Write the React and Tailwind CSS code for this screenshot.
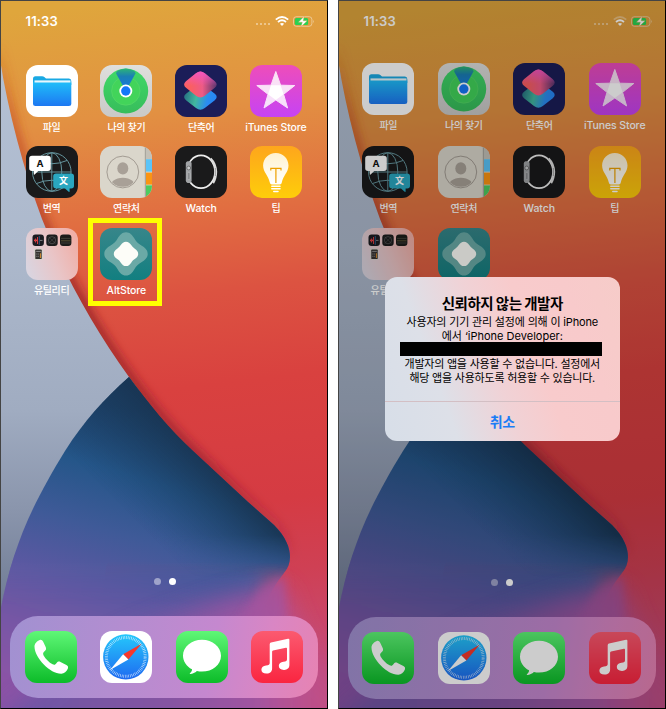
import React from "react";

const EDGE = "M-2 45 C5 100 22 165 42 219 C64 275 95 330 129 377 C148 403 170 430 193 451 L248 502 L274 525 C284 535 288 546 288 555";

function Wallpaper() {
  return (
    <svg className="absolute inset-0 h-full w-full" viewBox="0 0 328 709" preserveAspectRatio="none">
      <defs>
        <linearGradient id="warm" gradientUnits="userSpaceOnUse" x1="120" y1="0" x2="200" y2="709">
          <stop offset="0" stopColor="#dfa63c" />
          <stop offset=".16" stopColor="#e29142" />
          <stop offset=".31" stopColor="#e16d41" />
          <stop offset=".42" stopColor="#dc5341" />
          <stop offset=".55" stopColor="#d9413f" />
          <stop offset=".72" stopColor="#d53b43" />
          <stop offset=".82" stopColor="#cf4054" />
          <stop offset=".9" stopColor="#c9476a" />
          <stop offset="1" stopColor="#c44d80" />
        </linearGradient>
        <linearGradient id="slate" x1="0" y1="0" x2="0" y2="1">
          <stop offset="0" stopColor="#b4c1d5" />
          <stop offset=".3" stopColor="#adb9cc" />
          <stop offset=".55" stopColor="#a0acc1" />
          <stop offset=".7" stopColor="#8a95ac" />
          <stop offset=".85" stopColor="#6f7b94" />
          <stop offset="1" stopColor="#6c7890" />
        </linearGradient>
        <linearGradient id="deep" gradientUnits="userSpaceOnUse" x1="190" y1="425" x2="110" y2="709">
          <stop offset="0" stopColor="#1c3c60" />
          <stop offset=".22" stopColor="#255689" />
          <stop offset=".42" stopColor="#3f5a98" />
          <stop offset=".62" stopColor="#5c58a2" />
          <stop offset=".82" stopColor="#7957a5" />
          <stop offset="1" stopColor="#8b53a6" />
        </linearGradient>
        <linearGradient id="violet" gradientUnits="userSpaceOnUse" x1="0" y1="0" x2="328" y2="0">
          <stop offset="0" stopColor="#6557a6" />
          <stop offset=".5" stopColor="#8455a2" />
          <stop offset=".8" stopColor="#a854a0" />
          <stop offset="1" stopColor="#c24f84" />
        </linearGradient>
        <linearGradient id="shade" gradientUnits="userSpaceOnUse" x1="0" y1="40" x2="0" y2="560">
          <stop offset="0" stopColor="#c8481c" stopOpacity="0" />
          <stop offset=".15" stopColor="#c03c1c" stopOpacity=".5" />
          <stop offset=".5" stopColor="#8c1a20" stopOpacity=".75" />
          <stop offset=".8" stopColor="#8c1a2c" stopOpacity=".6" />
          <stop offset="1" stopColor="#8c1a30" stopOpacity=".05" />
        </linearGradient>
        <linearGradient id="navy" gradientUnits="userSpaceOnUse" x1="240" y1="495" x2="175" y2="560">
          <stop offset="0" stopColor="#193654" stopOpacity=".95" />
          <stop offset="1" stopColor="#1d4a78" stopOpacity="0" />
        </linearGradient>
        <linearGradient id="navyfade" gradientUnits="userSpaceOnUse" x1="0" y1="535" x2="0" y2="578">
          <stop offset="0" stopColor="#fff" />
          <stop offset="1" stopColor="#fff" stopOpacity="0" />
        </linearGradient>
        <linearGradient id="bodyfade" gradientUnits="userSpaceOnUse" x1="0" y1="562" x2="0" y2="604">
          <stop offset="0" stopColor="#fff" />
          <stop offset="1" stopColor="#fff" stopOpacity="0" />
        </linearGradient>
        <mask id="navymask" maskUnits="userSpaceOnUse" x="0" y="0" width="328" height="709"><rect width="328" height="709" fill="url(#navyfade)" /></mask>
        <mask id="bodymask" maskUnits="userSpaceOnUse" x="0" y="0" width="328" height="709"><rect width="328" height="709" fill="url(#bodyfade)" /></mask>
        <filter id="soft" filterUnits="userSpaceOnUse" x="-60" y="0" width="460" height="709"><feGaussianBlur stdDeviation="5" /></filter>
        <filter id="softer" filterUnits="userSpaceOnUse" x="-60" y="480" width="460" height="300"><feGaussianBlur stdDeviation="12" /></filter>
        <filter id="fine" filterUnits="userSpaceOnUse" x="150" y="520" width="200" height="200"><feGaussianBlur stdDeviation="5" /></filter>
        <filter id="edge" filterUnits="userSpaceOnUse" x="-60" y="540" width="460" height="220"><feGaussianBlur stdDeviation="9" /></filter>
        <clipPath id="rightside"><path d="M129 377 L340 377 L340 709 L0 709 L0 612 C13 545 32 505 65 451 C84 421 104 399 129 377Z" /></clipPath>
      </defs>
      <rect width="328" height="709" fill="url(#warm)" />
      <path d={EDGE} fill="none" stroke="url(#shade)" strokeWidth="11" filter="url(#soft)" />
      <path d="M-2 45 C5 100 22 165 42 219 C64 275 95 330 129 377 L140 392 L100 600 L0 709 L-2 709Z" fill="url(#slate)" />
      <g clipPath="url(#rightside)">
        {/* soft lower body of the fold */}
        <path d="M-30 560 H240 L266 572 C266 590 256 615 256 640 L280 760 H-30Z" fill="url(#deep)" filter="url(#edge)" />
        {/* crisp upper body of the fold, fading out below the tip */}
        <path
          d="M129 377 C148 403 170 430 193 451 L248 502 L274 525 C286 537 290 548 290 557 C290 563 288 568 284 573 C277 582 270 592 265 606 L-5 606 L-5 377Z"
          fill="url(#deep)"
          mask="url(#bodymask)"
        />
        <path d="M129 377 C148 403 170 430 193 451 L248 502 L274 525 C286 537 290 548 290 557 C290 563 288 568 284 573 L276 583 L0 590 L0 377Z" fill="url(#navy)" mask="url(#navymask)" />
        <path d="M280 588 Q240 592 190 610 Q120 632 60 670 L-20 740 H350 V690 Q300 650 284 588Z" fill="url(#violet)" opacity=".9" filter="url(#softer)" />
        <path d="M285 575 L262 588 L226 640 L286 650Z" fill="#a355a0" opacity=".7" filter="url(#fine)" />
      </g>
    </svg>
  );
}

const bg = (fill) => <rect width="52" height="52" rx="12" fill={fill} />;

function Grad({ id, from, to }) {
  return (
    <defs>
      <linearGradient id={id} x1="0" y1="0" x2="0" y2="1">
        <stop offset="0" stopColor={from} />
        <stop offset="1" stopColor={to} />
      </linearGradient>
    </defs>
  );
}

const art = {
  files: (
    <>
      {bg("#fff")}
      <Grad id="g-files" from="#1fbdf9" to="#1d78f2" />
      <path d="M7 14 Q7 11.3 9.5 11.3 H16 Q17.5 11.3 18.6 12.3 L20 13.5 H43 Q45.3 13.5 45.3 16 V20 H7Z" fill="#1aa9e4" />
      <rect x="8.5" y="15.4" width="36" height="3" fill="#fff" opacity=".9" />
      <path d="M7 17.4 H45.3 V38.5 Q45.3 41 42.8 41 H9.5 Q7 41 7 38.5Z" fill="url(#g-files)" />
    </>
  ),
  find: (
    <>
      <Grad id="g-find" from="#dfdfdd" to="#c9c9c7" />
      <Grad id="g-find2" from="#3fd968" to="#37bd5b" />
      <linearGradient id="g-wedge" x1="0" y1="0" x2="0" y2="1"><stop offset="0" stopColor="#2cb478" /><stop offset=".35" stopColor="#1b7fb4" /><stop offset="1" stopColor="#1478e8" /></linearGradient>
      {bg("url(#g-find)")}
      <circle cx="25.8" cy="26" r="22.4" fill="url(#g-find2)" />
      <circle cx="25.8" cy="26" r="14.2" fill="#42d45a" stroke="#5ad86c" strokeWidth=".6" />
      <path d="M25.8 26 L16 8.2 Q16.5 4.6 25.8 3.6 Q35.1 4.6 35.6 8.2Z" fill="url(#g-wedge)" />
      <circle cx="25.8" cy="26" r="6.5" fill="#fff" />
      <circle cx="25.8" cy="26" r="4.7" fill="#1478f8" />
    </>
  ),
  shortcuts: (
    <>
      {bg("#1b1d58")}
      <defs>
        <linearGradient id="g-s2" x1="0" y1=".3" x2="1" y2=".5"><stop offset="0" stopColor="#256d80" /><stop offset=".4" stopColor="#42b89e" /><stop offset=".75" stopColor="#2b8df0" /><stop offset="1" stopColor="#2586f8" /></linearGradient>
        <linearGradient id="g-s3" x1=".2" y1=".5" x2="1" y2=".5"><stop offset="0" stopColor="#fa5f62" /><stop offset=".45" stopColor="#ee5b86" /><stop offset="1" stopColor="#59356f" /></linearGradient>
        <linearGradient id="g-s4" x1="0" y1="0" x2="0" y2="1"><stop offset="0" stopColor="#f454c8" stopOpacity=".9" /><stop offset=".55" stopColor="#f454c8" stopOpacity="0" /></linearGradient>
      </defs>
      <path d="M21 21 Q25.4 17.4 29.8 21 L39.8 28.8 Q43.6 32 39.8 35.2 L29.8 43 Q25.4 46.6 21 43 L11 35.2 Q7.2 32 11 28.8Z" fill="url(#g-s2)" />
      <path d="M21 8.2 Q25.4 4.6 29.8 8.2 L39.8 16.2 Q43.6 19.5 39.8 22.8 L29.8 30.8 Q25.4 34.4 21 30.8 L11 22.8 Q7.2 19.5 11 16.2Z" fill="url(#g-s3)" />
      <path d="M21 8.2 Q25.4 4.6 29.8 8.2 L39.8 16.2 Q43.6 19.5 39.8 22.8 L29.8 30.8 Q25.4 34.4 21 30.8 L11 22.8 Q7.2 19.5 11 16.2Z" fill="url(#g-s4)" />
    </>
  ),
  itunes: (
    <>
      <Grad id="g-it" from="#ee4dba" to="#c643f4" />
      {bg("url(#g-it)")}
      <path d="M25.8 6.5 L30.6 20.2 L44.8 20.5 L33.6 29.3 L37.6 43 L25.8 35 L14 43 L18 29.3 L6.8 20.5 L21 20.2Z" fill="#fff" opacity=".84" stroke="#fff" strokeWidth="1" strokeLinejoin="round" />
      <path d="M21 20.2 H30.6 L33.6 29.3 L25.8 35 L18 29.3Z" fill="#fff" />
    </>
  ),
  translate: (
    <>
      {bg("#1a1a1b")}
      <g fill="none" stroke="#64949d" strokeWidth="1">
        <circle cx="25.8" cy="26" r="19.3" />
        <ellipse cx="25.8" cy="26" rx="10" ry="19.3" />
        <path d="M25.8 6.7V45.3M6.5 26H45M10.5 14.5Q26 21 41 14.5M10.5 37.5Q26 31 41 37.5" />
      </g>
      <path d="M6 9.8 H22 Q24.8 9.8 24.8 12.5 V22.3 Q24.8 25 22 25 H12.3 L8.6 28.6 Q7.8 29 7.8 28 V25 H6 Q3.2 25 3.2 22.3 V12.5 Q3.2 9.8 6 9.8Z" fill="#fff" />
      <path d="M30 27.6 H45.2 Q48 27.6 48 30.3 V39.7 Q48 42.4 45.2 42.4 H43.6 V45.3 Q43.6 46.4 42.7 45.7 L39 42.4 H30 Q27.2 42.4 27.2 39.7 V30.3 Q27.2 27.6 30 27.6Z" fill="#2aa7c0" />
      <text x="14" y="20.8" textAnchor="middle" className="font-['Inter','Noto_Sans_CJK_KR',sans-serif] text-[9.5px] font-bold" fill="#111">A</text>
      <text x="37.6" y="38.4" textAnchor="middle" className="font-['Noto_Sans_CJK_JP',sans-serif] text-[9px] font-bold" fill="#fff">文</text>
    </>
  ),
  contacts: (
    <>
      <clipPath id="c-con"><rect width="52" height="52" rx="12" /></clipPath>
      <clipPath id="c-head"><circle cx="22.8" cy="26" r="14.8" /></clipPath>
      <g clipPath="url(#c-con)">
        <rect width="52" height="52" fill="#dad6cb" />
        <rect x="45.4" width="7" height="13" fill="#c4c1b8" />
        <rect x="45.4" y="13.2" width="7" height="12.4" fill="#5ac4f8" />
        <rect x="45.4" y="26.6" width="7" height="12" fill="#fb9412" />
        <rect x="45.4" y="39.4" width="7" height="13" fill="#4dcb60" />
        <path d="M45.4 0V52" stroke="#a8a69e" strokeWidth="1.2" />
      </g>
      <circle cx="22.8" cy="26" r="15.9" fill="none" stroke="#a39c93" strokeWidth="1" />
      <g clipPath="url(#c-head)" fill="#a8a097">
        <ellipse cx="22.8" cy="22.4" rx="5.5" ry="6.2" />
        <ellipse cx="22.8" cy="42" rx="13.5" ry="10.2" />
      </g>
    </>
  ),
  watch: (
    <>
      {bg("#1a1a1b")}
      <ellipse cx="26" cy="25.8" rx="14" ry="16.4" fill="none" stroke="#ededed" strokeWidth="1.7" />
      <path d="M35.5 12.5 Q40.6 17.5 41 25.8 Q40.8 33 38 37" fill="none" stroke="#dcdcdc" strokeWidth="2.4" />
      <path d="M40.3 22V30" stroke="#9a9a9a" strokeWidth="1" />
      <path d="M12.5 15.2 H15 Q16.6 15.6 16.6 17.4 V34.6 Q16.6 36.6 15 37 H12.5 Q10.8 36.4 10.8 34.6 V17.4 Q10.8 15.8 12.5 15.2Z" fill="#a1a3a6" />
      <circle cx="13.7" cy="22" r="1.9" fill="#c9cacc" stroke="#565656" strokeWidth=".7" />
      <rect x="12.4" y="26.5" width="2.6" height="7" rx="1" fill="#87898c" stroke="#cfcfcf" strokeWidth=".4" />
    </>
  ),
  tips: (
    <>
      <Grad id="g-tip" from="#fea61c" to="#fecd0a" />
      <Grad id="g-bulb" from="#fff2cf" to="#fff" />
      {bg("url(#g-tip)")}
      <path d="M25.8 7 C33.2 7 38.5 12.7 38.5 19.4 C38.5 26 33.2 29.4 31.8 36.4 Q31.5 38.4 29.8 38.4 H21.8 Q20.2 38.4 19.8 36.4 C18.4 29.4 13.1 26 13.1 19.4 C13.1 12.7 18.4 7 25.8 7Z" fill="url(#g-bulb)" />
      <path d="M20.8 24.5V22.3H31V24.5M25.9 22.3V37" fill="none" stroke="#eda000" strokeWidth="1.2" />
      <path d="M21.8 40.2H30M21.8 42.8H30M23.8 45.4H28" stroke="#fff" strokeWidth="1.5" strokeLinecap="round" />
    </>
  ),
  folder: (
    <>
      <defs>
        <linearGradient id="g-fold" x1="0" y1=".7" x2="1" y2=".3"><stop offset="0" stopColor="#dad4df" /><stop offset=".5" stopColor="#e9c5c7" /><stop offset="1" stopColor="#f0aea6" /></linearGradient>
      </defs>
      {bg("url(#g-fold)")}
      <rect x="6.5" y="6.5" width="11.4" height="11.4" rx="3" fill="#1b1b20" />
      <path d="M8 12.4H12" stroke="#e34345" strokeWidth="1.6" />
      <path d="M9.5 10.5V14.5M11.5 9V16" stroke="#d23b40" strokeWidth="1" />
      <path d="M13.3 8V16.8" stroke="#3b83c8" strokeWidth=".6" />
      <path d="M14 12.4H16.5" stroke="#aaa" strokeWidth=".7" />
      <rect x="20.3" y="6.5" width="11.4" height="11.4" rx="3" fill="#1c1c1d" />
      <circle cx="26" cy="12.2" r="3.6" fill="none" stroke="#666" strokeWidth=".6" />
      <path d="M22.5 8.7L29.5 15.7M29.5 8.7L22.5 15.7" stroke="#555" strokeWidth=".5" />
      <rect x="34" y="6.5" width="11.4" height="11.4" rx="3" fill="#1c1c1a" />
      <path d="M35 10.4H44.5M35 15H44.5" stroke="#56564a" strokeWidth=".6" />
      <path d="M35 12.8H44.5" stroke="#7d7444" strokeWidth=".6" />
      <rect x="8" y="20.5" width="9" height="11.4" rx="2" fill="#d8d4cd" />
      <rect x="9.3" y="21.5" width="6.4" height="9.6" rx=".7" fill="#34332f" />
      <path d="M10.2 23.4H14.8" stroke="#999" strokeWidth=".9" />
      <path d="M10.3 26H13M10.3 28.3H13" stroke="#999" strokeWidth=".8" strokeDasharray="1 .5" />
      <path d="M14.4 25.3V30" stroke="#d9902f" strokeWidth="1" />
    </>
  ),
  alt: (
    <>
      <Grad id="g-alt" from="#37868a" to="#127f80" />
      {bg("url(#g-alt)")}
      <path d="M26 4.3 C30 4.3 32.4 7.2 34.4 10.6 C36.2 13.8 38.2 15.8 41.4 17.6 C44.8 19.6 47.7 21.9 47.7 25.9 C47.7 29.9 44.8 32.2 41.4 34.2 C38.2 36 36.2 38 34.4 41.2 C32.4 44.6 30 47.5 26 47.5 C22 47.5 19.6 44.6 17.6 41.2 C15.8 38 13.8 36 10.6 34.2 C7.2 32.2 4.3 29.9 4.3 25.9 C4.3 21.9 7.2 19.6 10.6 17.6 C13.8 15.8 15.8 13.8 17.6 10.6 C19.6 7.2 22 4.3 26 4.3Z" fill="#6aa9a6" />
      <path d="M26 13.7 C28.3 13.7 29.9 15.2 31.2 17.1 C32.3 18.7 33.2 19.6 34.8 20.7 C36.7 22 38.2 23.6 38.2 25.9 C38.2 28.2 36.7 29.8 34.8 31.1 C33.2 32.2 32.3 33.1 31.2 34.7 C29.9 36.6 28.3 38.1 26 38.1 C23.7 38.1 22.1 36.6 20.8 34.7 C19.7 33.1 18.8 32.2 17.2 31.1 C15.3 29.8 13.8 28.2 13.8 25.9 C13.8 23.6 15.3 22 17.2 20.7 C18.8 19.6 19.7 18.7 20.8 17.1 C22.1 15.2 23.7 13.7 26 13.7Z" fill="#fdfdf8" />
    </>
  ),
  phone: (
    <>
      <Grad id="g-green" from="#5ff777" to="#0cbc29" />
      {bg("url(#g-green)")}
      <path d="M9.5 15.8 C9.3 12.6 12 10 14.8 8.9 C16.3 8.4 17.5 9.4 18.2 10.8 L20.8 16.3 C21.5 18 20.9 19 19.8 20.1 C18.2 21.5 17.6 22.3 18.6 24.4 C20.8 28.2 24 31.3 27.6 33.3 C29.5 34.3 30.3 33.7 31.6 32 C32.9 30.4 34 30.2 35.5 31 L41.4 34.1 C43 35 43.5 36.2 42.8 37.7 C41.4 40.6 39.3 42.6 36.3 42.8 C25.5 43 9.8 27.2 9.5 15.8Z" fill="#fff" />
    </>
  ),
  safari: (
    <>
      <Grad id="g-saf" from="#25c8fb" to="#1e6af1" />
      {bg("#fff")}
      <circle cx="25.8" cy="25.9" r="22.7" fill="url(#g-saf)" />
      <circle cx="25.8" cy="25.9" r="19.4" fill="none" stroke="#fff" strokeWidth="3" strokeDasharray=".55 1.14" opacity=".85" />
      <path d="M41.6 12.8 L28.4 28.6 L23.1 23.3Z" fill="#f6372c" />
      <path d="M10 39 L23.1 23.3 L28.4 28.6Z" fill="#fff" />
    </>
  ),
  messages: (
    <>
      {bg("url(#g-green)")}
      <path d="M26 8.8 C36.6 8.8 45 15.9 45 24.7 C45 33.5 36.6 40.6 26 40.6 C24.2 40.6 22.5 40.4 20.9 40 C19 41.8 16.8 42.8 14.1 42.9 C13.6 42.9 13.6 42.4 13.9 42.2 C15.4 41 16.2 39.8 16 38.3 C10.6 35.4 7 30.4 7 24.7 C7 15.9 15.4 8.8 26 8.8Z" fill="#fff" />
    </>
  ),
  music: (
    <>
      <Grad id="g-mus" from="#fb5a70" to="#fa2540" />
      {bg("url(#g-mus)")}
      <path d="M18.7 13.2 Q18.7 11.8 20 11.5 L37 7.7 Q38.4 7.5 38.4 8.8 V34 C38.4 37.2 36.3 38.7 33.2 38.9 C29.8 39 27.7 37.3 27.8 34.8 C27.9 32.4 29.6 31.3 32.4 30.8 C35.2 30.3 36 29.9 36 28.2 V17.6 Q36 16.5 34.9 16.8 L22 19.6 Q21.1 19.8 21.1 20.8 V37.6 C21.1 40.8 18.9 42.5 15.8 42.6 C12.4 42.8 10.3 41 10.4 38.5 C10.5 36.1 12.2 35 15 34.5 C17.8 34 18.7 33.6 18.7 31.9Z" fill="#fff" />
    </>
  ),
};

function Icon({ name }) {
  return (
    <svg className="block h-[52px] w-[52px] shrink-0" viewBox="0 0 52 52">
      {art[name]}
    </svg>
  );
}

const apps = [
  ["files", "파일"],
  ["find", "나의 찾기"],
  ["shortcuts", "단축어"],
  ["itunes", "iTunes Store"],
  ["translate", "번역"],
  ["contacts", "연락처"],
  ["watch", "Watch"],
  ["tips", "팁"],
  ["folder", "유틸리티"],
  ["alt", "AltStore"],
];

const latin = /^[A-Za-z]/;

function StatusBar({ weakWifi }) {
  return (
    <div className="flex h-10 items-center pt-[2px] pl-[25.5px] pr-[13px] text-white">
      <span className="text-[13px] leading-none font-semibold tracking-[0.15px]">11:33</span>
      <div className="ml-auto flex items-center">
        <div className="mt-[6px] mr-[5px] flex gap-[1.5px] opacity-40">
          <i className="size-[2.5px] bg-white" />
          <i className="size-[2.5px] bg-white" />
          <i className="size-[2.5px] bg-white" />
          <i className="size-[2.5px] bg-white" />
        </div>
        <svg className="mr-1 h-[10px] w-[14px]" viewBox="0 0 14 10" fill="none" stroke="#fff" strokeWidth="1.8">
          <path d="M.8 3.7 Q7 -1.8 13.2 3.7" opacity={weakWifi ? 0.35 : 1} />
          <path d="M3 6 Q7 2.5 11 6" />
          <path d="M4.9 7.8 Q7 6 9.1 7.8 L7 10Z" fill="#fff" stroke="none" />
        </svg>
        <svg className="h-[11px] w-[22px]" viewBox="0 0 22 11">
          <rect x=".5" y=".7" width="18.4" height="9.6" rx="2.8" fill="none" stroke="#fff" opacity=".42" />
          <path d="M20 3.7 Q21.6 5.5 20 7.3Z" fill="#fff" opacity=".45" />
          <rect x="1.8" y="2" width="13.3" height="7" rx="1.5" fill="#2bd152" />
          <path d="M11.2 .3 L5.4 6.2 H9.3 L8 10.8 L14.2 4.8 H10.2Z" fill="#fff" stroke="#c9a54c" strokeWidth=".4" />
        </svg>
      </div>
    </div>
  );
}

function Phone({ second }) {
  return (
    <section className="relative flex h-[709px] w-[328px] shrink-0 flex-col overflow-hidden">
      <Wallpaper />
      <div className="relative flex flex-1 flex-col">
        <StatusBar weakWifi={second} />
        <div
          className={
            second
              ? "mt-[23px] ml-[12.5px] grid auto-rows-[82.5px] grid-cols-[repeat(4,75.5px)]"
              : "mt-[24.5px] ml-[14.2px] grid auto-rows-[81.6px] grid-cols-[repeat(4,74.8px)]"
          }
        >
          {apps.map(([icon, label]) => (
            <div key={icon} className="relative flex flex-col items-center">
              <Icon name={icon} />
              {!(second && icon === "alt") && (
                <span
                  className={
                    latin.test(label)
                      ? "mt-[4px] text-[10.5px] leading-[14px] font-medium tracking-[-0.1px] whitespace-nowrap text-white"
                      : "mt-[3px] text-[10px] leading-[14px] font-medium tracking-[-0.35px] whitespace-nowrap text-white"
                  }
                >
                  {label}
                </span>
              )}
              {icon === "alt" && !second && (
                <div className="absolute -top-[10px] left-[-1px] h-[88px] w-[74px] border-[5px] border-[#ffff00]" />
              )}
            </div>
          ))}
        </div>
        <div className={second ? "mt-auto mb-[31px] ml-[153px] flex gap-[8px]" : "mt-auto mb-[31px] ml-[153.6px] flex gap-[8px]"}>
          <i className="size-[7px] rounded-full bg-white/45" />
          <i className="size-[7px] rounded-full bg-white" />
        </div>
        <div
          className={
            second
              ? "mb-[10.5px] ml-[10px] grid h-[81.5px] w-[308px] grid-cols-[repeat(4,75.5px)] items-center rounded-[28px] bg-linear-[100deg,#a191d1_0%,#b38dd0_35%,#c588cf_65%,#d986c4_82%,#e783b2_100%] pl-[2.5px]"
              : "mb-[11.5px] ml-[10px] grid h-[81.5px] w-[308px] grid-cols-[repeat(4,75.5px)] items-center rounded-[28px] bg-linear-[100deg,#a191d1_0%,#b38dd0_35%,#c588cf_65%,#d986c4_82%,#e783b2_100%] pl-[3px]"
          }
        >
          {["phone", "safari", "messages", "music"].map((n) => (
            <div key={n} className="flex justify-center">
              <Icon name={n} />
            </div>
          ))}
        </div>
      </div>
      {second && <div className="absolute inset-0 bg-black/20" />}
      {second && <Alert />}
      <div className="pointer-events-none absolute inset-0 border border-t-[#444] border-r-black border-b-black border-l-[#444]" />
    </section>
  );
}

function Alert() {
  return (
    <div className="absolute top-[277px] left-[47px] flex h-[164px] w-[234.5px] flex-col overflow-hidden rounded-[12px] bg-linear-[70deg,#d7dee8_0%,#dde0e8_25%,#f0d2d6_46%,#f8cbcc_62%,#f8cacb_80%,#f6ccc9_100%] text-black">
      <div className="flex h-[125px] flex-col items-center border-b border-[#d3bfc4] pt-[17px]">
        <h1 className="text-[14.5px] leading-[19px] font-bold tracking-[-0.55px] whitespace-nowrap">신뢰하지 않는 개발자</h1>
        <p className="mt-[2px] text-[11px] leading-[14px] tracking-[-0.17px] whitespace-nowrap">사용자의 기기 관리 설정에 의해 이 iPhone</p>
        <p className="text-[11px] leading-[14px] whitespace-nowrap">에서 ‘iPhone Developer:</p>
        <div className="-ml-[3px] h-[14px] w-[202px] -translate-y-px bg-black" />
        <p className="text-[11px] leading-[14px] tracking-[-0.22px] whitespace-nowrap">개발자의 앱을 사용할 수 없습니다. 설정에서</p>
        <p className="text-[11px] leading-[14px] tracking-[-0.22px] whitespace-nowrap">해당 앱을 사용하도록 허용할 수 있습니다.</p>
      </div>
      <button className="flex-1 text-[14px] leading-none font-bold tracking-[-0.3px] text-[#1b7df5]">취소</button>
    </div>
  );
}

export default function App() {
  return (
    <main className="flex h-[709px] w-[666px] justify-between overflow-hidden bg-white font-['Inter','Noto_Sans_CJK_KR',sans-serif]">
      <Phone />
      <Phone second />
    </main>
  );
}
